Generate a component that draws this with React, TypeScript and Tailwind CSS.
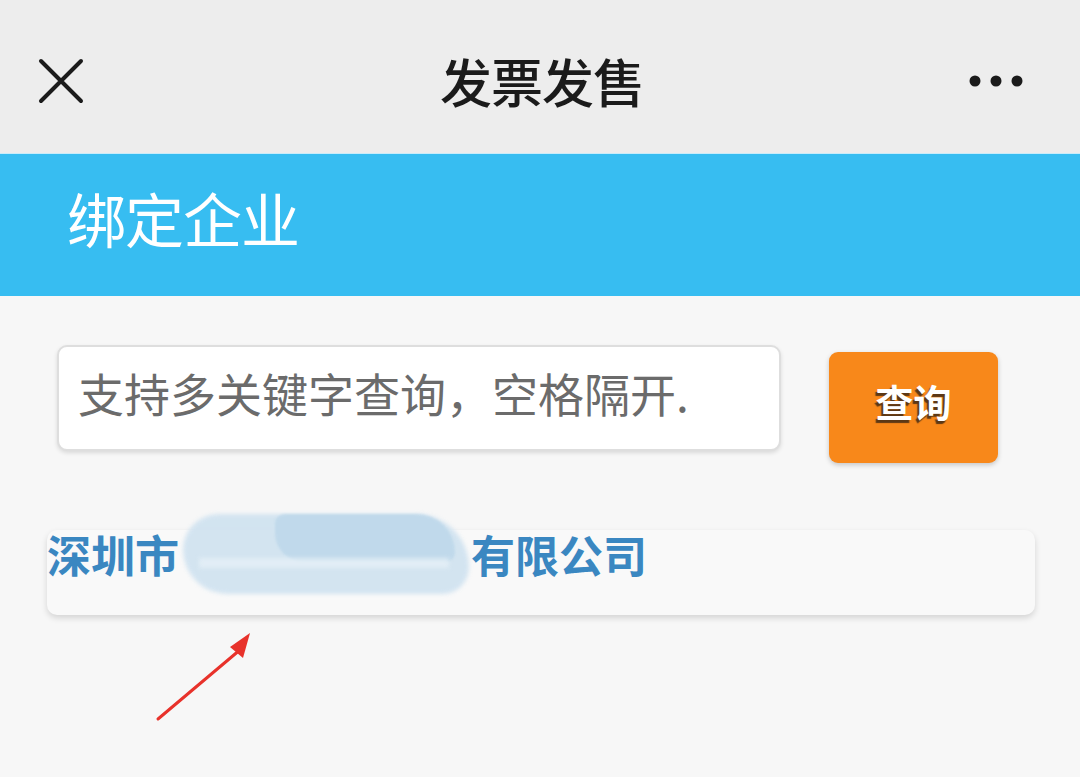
const cjk = { fontFamily: '"Noto Sans CJK SC", "Noto Sans", sans-serif' };

const App = () => {
  return (
    <div className="w-[1080px] h-[777px] bg-[#f7f7f7] overflow-hidden" style={cjk}>
      {/* nav bar */}
      <div className="h-[153px] bg-[#ededed] flex items-center px-[38px] pt-[9px]">
        <div className="flex-1">
          <svg width="46" height="46" viewBox="0 0 46 46">
            <path d="M3 3 L43 43 M43 3 L3 43" stroke="#1b1b1b" strokeWidth="4" strokeLinecap="round" />
          </svg>
        </div>
        <h1 className="text-[52px] font-medium text-[#1b1b1b] leading-none tracking-[-1px] pl-[4px]">发票发售</h1>
        <div className="flex-1 flex justify-end">
          <svg width="56" height="14" viewBox="0 0 56 14" className="mr-[18px]">
            <circle cx="7" cy="7" r="5.5" fill="#1b1b1b" />
            <circle cx="28" cy="7" r="5.5" fill="#1b1b1b" />
            <circle cx="49" cy="7" r="5.5" fill="#1b1b1b" />
          </svg>
        </div>
      </div>

      {/* section header */}
      <div className="h-[143px] bg-[#37bdf1] border-t border-[#c9ecfa] flex items-center pl-[67px] pb-[16px]">
        <span className="text-[59px] text-white leading-none tracking-[-1px]">绑定企业</span>
      </div>

      {/* search */}
      <div className="flex items-start pl-[57px] pt-[49px]">
        <div className="w-[724px] h-[106px] bg-white rounded-[10px] border-2 border-[#dedede] shadow-[0_2px_4px_rgba(0,0,0,0.12)] flex items-center pl-[19px] pb-[12px]">
          <span className="text-[46px] text-[#6b6b6b] leading-none whitespace-nowrap">
            支持多关键字查询，空格隔开.
          </span>
        </div>
        <button className="ml-[48px] mt-[7px] w-[169px] h-[111px] bg-[#f8881a] rounded-[9px] shadow-[0_2px_5px_rgba(0,0,0,0.2)] flex items-center justify-center pb-[14px]">
          <span className="text-[38px] font-bold text-white leading-none [text-shadow:-2px_3px_1px_rgba(40,30,20,0.75)]">
            查询
          </span>
        </button>
      </div>

      {/* result card */}
      <div className="ml-[47px] mt-[67px] w-[988px] h-[85px] bg-[#f9f9f9] rounded-[10px] shadow-[0_3px_6px_rgba(0,0,0,0.14)]">
        <div className="flex items-start pt-[2px] text-[44px] font-bold text-[#3a87c1] leading-none">
          <span>深圳市</span>
          <span className="relative w-[292px] h-[44px]">
            <span className="absolute left-[4px] top-[-18px] w-[286px] h-[80px] rounded-[40px_60px_30px_50px] bg-[#cfe2f0] opacity-90 blur-[2px]" />
            <span className="absolute left-[96px] top-[-18px] w-[180px] h-[48px] rounded-[10px_40px_10px_30px] bg-[#bcd7ea] opacity-80 blur-[1px]" />
            <span className="absolute left-[20px] top-[26px] w-[250px] h-[10px] bg-[#e6f0f7] opacity-80 blur-[2px]" />
          </span>
          <span>有限公司</span>
        </div>
      </div>

      {/* annotation arrow */}
      <svg width="120" height="100" viewBox="0 0 120 100" className="ml-[150px] mt-[16px]">
        <path d="M8 88 L91 18" stroke="#e8322b" strokeWidth="3" strokeLinecap="round" />
        <path d="M100 2 L80 16 L93 27 Z" fill="#e8322b" />
      </svg>
    </div>
  );
};

export default App;
